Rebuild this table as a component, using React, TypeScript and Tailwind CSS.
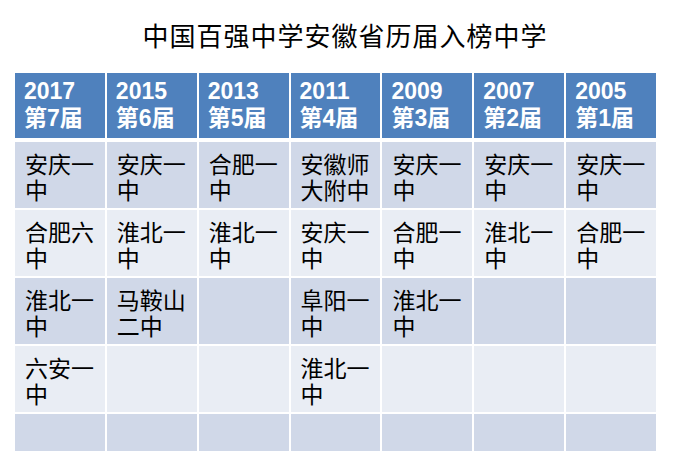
const headers = [
  ["2017", "第7届"],
  ["2015", "第6届"],
  ["2013", "第5届"],
  ["2011", "第4届"],
  ["2009", "第3届"],
  ["2007", "第2届"],
  ["2005", "第1届"],
];

const rows = [
  ["安庆一中", "安庆一中", "合肥一中", "安徽师大附中", "安庆一中", "安庆一中", "安庆一中"],
  ["合肥六中", "淮北一中", "淮北一中", "安庆一中", "合肥一中", "淮北一中", "合肥一中"],
  ["淮北一中", "马鞍山二中", "", "阜阳一中", "淮北一中", "", ""],
  ["六安一中", "", "", "淮北一中", "", "", ""],
  ["", "", "", "", "", "", ""],
];

export default function App() {
  return (
    <div className="w-[680px] h-[459px] bg-white overflow-hidden font-['Liberation_Sans','Noto_Sans_CJK_SC',sans-serif]">
      <div className="h-[73px] pt-[24px] pl-[10px] text-center text-[26px] leading-[26px] tracking-[1px] text-black">
        中国百强中学安徽省历届入榜中学
      </div>
      <div className="ml-[15px] w-[641px] flex flex-col gap-[2px]">
        <div className="grid grid-cols-7 gap-[2px] mb-[2px]">
          {headers.map(([year, term]) => (
            <div
              key={year}
              className="h-[65px] bg-[#4f81bd] text-white font-bold text-[23px] leading-[27px] pl-[9px] pt-[5px]"
            >
              <div>{year}</div>
              <div>{term}</div>
            </div>
          ))}
        </div>
        {rows.map((row, i) => (
          <div key={i} className="grid grid-cols-7 gap-[2px]">
            {row.map((cell, j) => (
              <div
                key={j}
                className={
                  (i % 2 === 0 ? "bg-[#d0d8e8] " : "bg-[#e9edf4] ") +
                  (i === 4 ? "h-[37px] " : "h-[66px] ") +
                  "text-[23px] leading-[26px] text-black pl-[10px] pr-[8px] pt-[10px]"
                }
              >
                {cell}
              </div>
            ))}
          </div>
        ))}
      </div>
    </div>
  );
}
